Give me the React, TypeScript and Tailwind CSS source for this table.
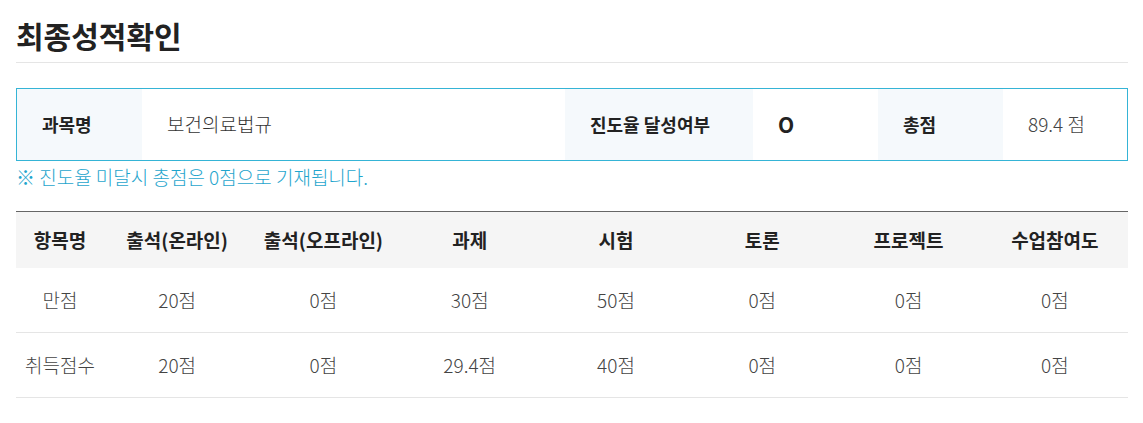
import React from "react";

const font = { fontFamily: '"Noto Sans CJK KR", "Noto Sans", sans-serif' };

const headers = ["항목명", "출석(온라인)", "출석(오프라인)", "과제", "시험", "토론", "프로젝트", "수업참여도"];
const rows = [
  ["만점", "20점", "0점", "30점", "50점", "0점", "0점", "0점"],
  ["취득점수", "20점", "0점", "29.4점", "40점", "0점", "0점", "0점"],
];

export default function App() {
  return (
    <div className="w-[1143px] h-[423px] bg-white" style={font}>
      <div className="ml-[16px] w-[1112px]">
        <div className="h-[63px] border-b border-[#e5e5e5] pt-[15px]">
          <h1 className="text-[30px] leading-[40px] font-bold text-[#222222]">최종성적확인</h1>
        </div>
        <div className="mt-[25px] h-[73px] border border-[#35b4d6] grid grid-cols-[125px_423px_188px_125px_125px_1fr]">
          <div className="bg-[#f5f9fc] flex items-center pl-[25px] text-[18px] font-bold text-[#222222]">과목명</div>
          <div className="flex items-center pl-[25px] text-[19px] font-light text-[#333333]">보건의료법규</div>
          <div className="bg-[#f5f9fc] flex items-center pl-[25px] text-[18px] font-bold text-[#222222]">진도율 달성여부</div>
          <div className="flex items-center pl-[25px] text-[21px] font-bold text-[#222222]">O</div>
          <div className="bg-[#f5f9fc] flex items-center pl-[25px] text-[18px] font-bold text-[#222222]">총점</div>
          <div className="flex items-center pl-[25px] text-[19px] font-light text-[#444444]">89.4 점</div>
        </div>
        <div className="pt-[4px] text-[19px] leading-[24px] font-light text-[#1fa5cd]">※ 진도율 미달시 총점은 0점으로 기재됩니다.</div>
        <div className="mt-[22px] border-t border-[#666666]">
          <div className="grid grid-cols-[88px_repeat(7,1fr)] h-[56px] bg-[#f5f5f5]">
            {headers.map((h) => (
              <div key={h} className="flex items-center justify-center text-[19px] font-bold text-[#222222]">{h}</div>
            ))}
          </div>
          {rows.map((r, i) => (
            <div key={i} className="grid grid-cols-[88px_repeat(7,1fr)] h-[65px] border-b border-[#e5e5e5]">
              {r.map((c, j) => (
                <div key={j} className="flex items-center justify-center text-[19px] font-light text-[#444444]">{c}</div>
              ))}
            </div>
          ))}
        </div>
      </div>
    </div>
  );
}
